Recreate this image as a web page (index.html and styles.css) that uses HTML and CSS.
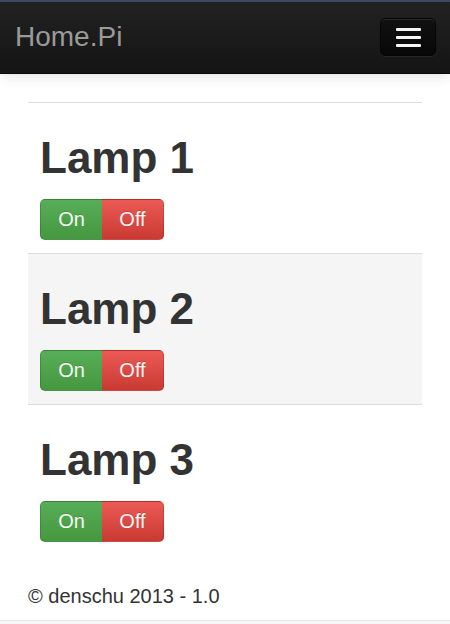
FILE: index.html
```html
<!DOCTYPE html>
<html>
<head>
<meta charset="utf-8">
<link rel="stylesheet" href="styles.css">
</head>
<body>
<div class="navbar">
  <span class="brand">Home.Pi</span>
  <button class="toggle" aria-label="menu"><span class="bar"></span><span class="bar"></span><span class="bar"></span></button>
</div>
<div class="container">
  <div class="lamp">
    <h1>Lamp 1</h1>
    <div class="group"><button class="btn on">On</button><button class="btn off">Off</button></div>
  </div>
  <div class="lamp alt">
    <h1>Lamp 2</h1>
    <div class="group"><button class="btn on">On</button><button class="btn off">Off</button></div>
  </div>
  <div class="lamp">
    <h1>Lamp 3</h1>
    <div class="group"><button class="btn on">On</button><button class="btn off">Off</button></div>
  </div>
  <footer class="footer">© denschu 2013 - 1.0</footer>
</div>
</body>
</html>
```
FILE: styles.css
```css
html {
  background: #f6f6f6;
}
html, body {
  margin: 0;
  padding: 0;
  font-family: "Liberation Sans", Arial, sans-serif;
  color: #333;
}
body {
  background: #fff;
  border-bottom: 1px solid #e6e6e6;
}
.navbar {
  height: 71px;
  border-top: 2px solid #3b4862;
  background: linear-gradient(#222, #141414);
  border-bottom: 1px solid #0a0a0a;
  box-shadow: 0 2px 12px rgba(0,0,0,0.12);
  display: flex;
  align-items: center;
  justify-content: space-between;
  padding: 0 14px 0 15px;
  box-sizing: content-box;
}
.brand {
  font-size: 28px;
  color: #9a9a9a;
  margin-top: -1px;
}
.toggle {
  width: 56px;
  height: 38px;
  margin-top: -1px;
  border: 1px solid #050505;
  border-radius: 5px;
  background: linear-gradient(#111, #080808);
  box-shadow: inset 0 1px 0 rgba(255,255,255,0.1), 0 1px 0 rgba(255,255,255,0.07);
  display: flex;
  flex-direction: column;
  align-items: center;
  justify-content: center;
  gap: 5px;
  padding: 0;
}
.bar {
  display: block;
  width: 25px;
  height: 3px;
  border-radius: 1px;
  background: #f5f5f5;
}
.container {
  padding: 28px 28px 0;
}
.lamp {
  border-top: 1px solid #ddd;
  padding: 30px 12px 13px;
}
.lamp.alt {
  background: #f5f5f5;
}
h1 {
  margin: 0 0 17px;
  font-size: 44px;
  line-height: 49px;
  font-weight: bold;
  color: #333;
}
.group {
  display: flex;
}
.btn {
  width: 62px;
  height: 41px;
  border: 1px solid rgba(0,0,0,0.15);
  font-family: "Liberation Sans", Arial, sans-serif;
  font-size: 20px;
  color: #f4fff4;
  padding: 0;
  text-shadow: 0 -1px 0 rgba(0,0,0,0.15);
}
.on {
  background: linear-gradient(#58ad58, #45983f);
  border-radius: 5px 0 0 5px;
  border-right: none;
}
.off {
  background: linear-gradient(#ec5a55, #c93a33);
  border-radius: 0 5px 5px 0;
  border-left: none;
  color: #fff4f4;
}
.footer {
  padding: 30px 0 12px;
  font-size: 20px;
  line-height: 23px;
  color: #333;
}
```
